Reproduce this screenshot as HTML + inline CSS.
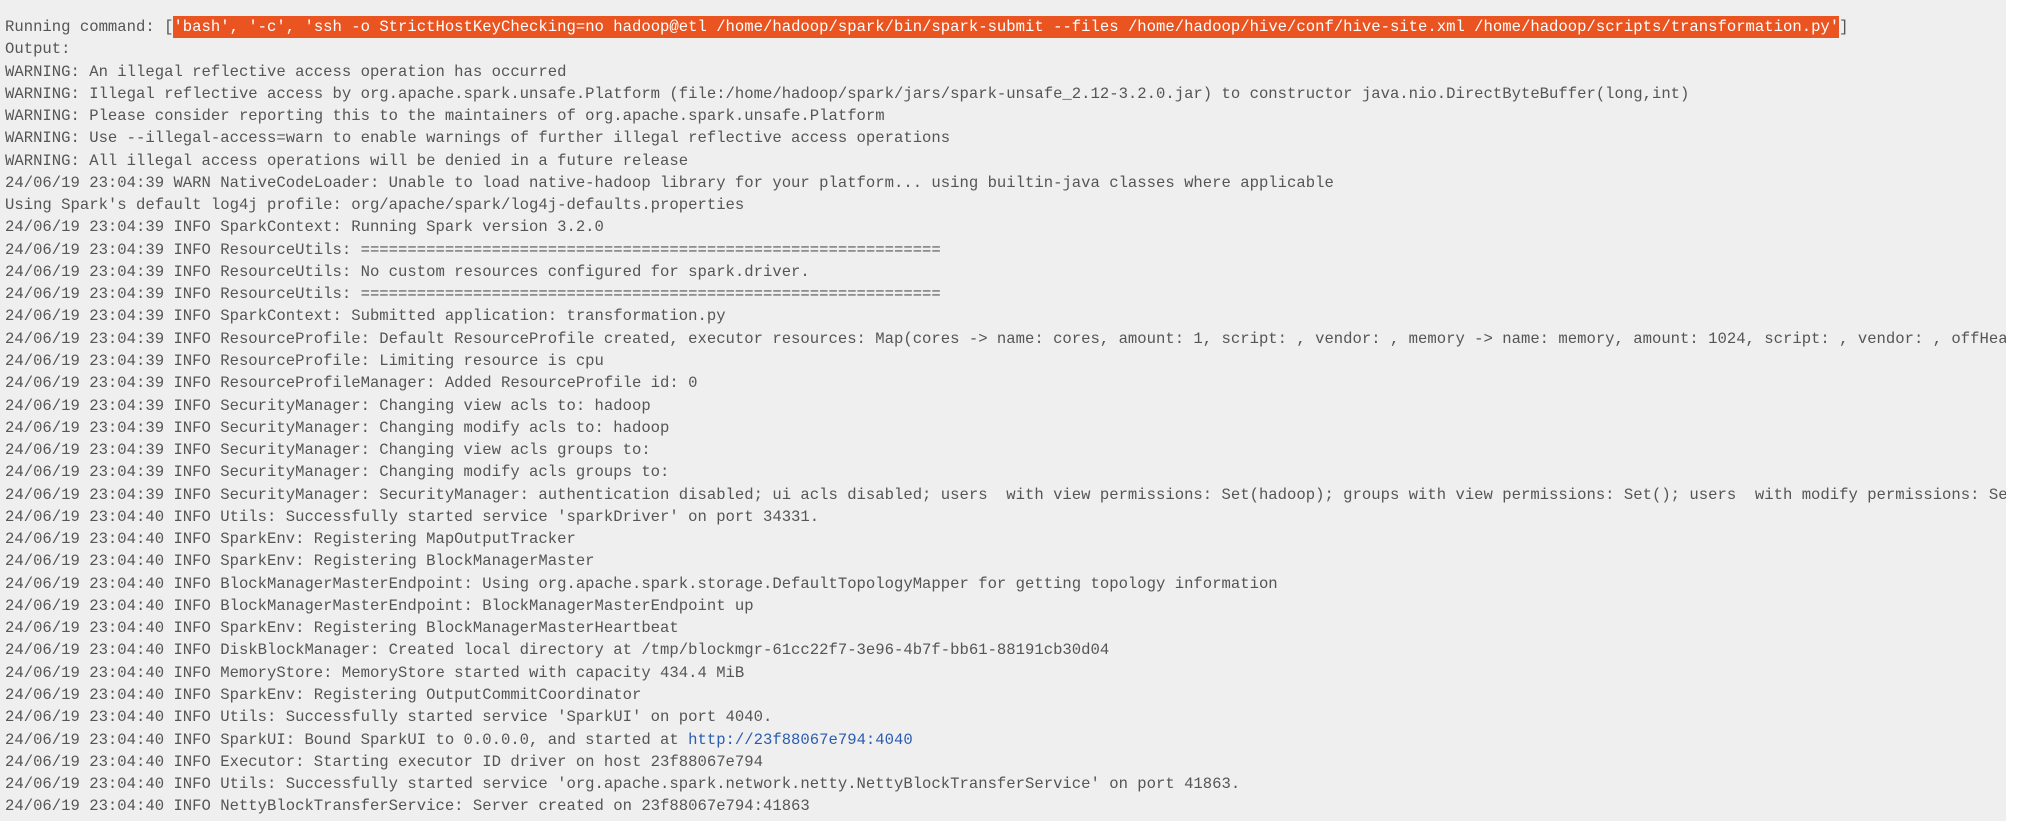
<!DOCTYPE html>
<html><head><meta charset="utf-8"><style>
html,body{margin:0;padding:0;background:#fff;width:2017px;height:821px;overflow:hidden}
#t{position:absolute;left:0;top:0;width:2006px;height:821px;background:#efefef;overflow:hidden}
pre{margin:0;padding:16px 0 0 5px;font-family:"Liberation Mono","DejaVu Sans Mono",monospace;font-size:15.6px;line-height:22.26px;color:#555;white-space:pre}
.h{background:#e95420;color:#fff;padding:2px 0}
.l{color:#2a5db0}
</style></head><body><div id="t"><pre>Running command: [<span class="h">'bash', '-c', 'ssh -o StrictHostKeyChecking=no hadoop@etl /home/hadoop/spark/bin/spark-submit --files /home/hadoop/hive/conf/hive-site.xml /home/hadoop/scripts/transformation.py'</span>]
Output:
WARNING: An illegal reflective access operation has occurred
WARNING: Illegal reflective access by org.apache.spark.unsafe.Platform (file:/home/hadoop/spark/jars/spark-unsafe_2.12-3.2.0.jar) to constructor java.nio.DirectByteBuffer(long,int)
WARNING: Please consider reporting this to the maintainers of org.apache.spark.unsafe.Platform
WARNING: Use --illegal-access=warn to enable warnings of further illegal reflective access operations
WARNING: All illegal access operations will be denied in a future release
24/06/19 23:04:39 WARN NativeCodeLoader: Unable to load native-hadoop library for your platform... using builtin-java classes where applicable
Using Spark's default log4j profile: org/apache/spark/log4j-defaults.properties
24/06/19 23:04:39 INFO SparkContext: Running Spark version 3.2.0
24/06/19 23:04:39 INFO ResourceUtils: ==============================================================
24/06/19 23:04:39 INFO ResourceUtils: No custom resources configured for spark.driver.
24/06/19 23:04:39 INFO ResourceUtils: ==============================================================
24/06/19 23:04:39 INFO SparkContext: Submitted application: transformation.py
24/06/19 23:04:39 INFO ResourceProfile: Default ResourceProfile created, executor resources: Map(cores -&gt; name: cores, amount: 1, script: , vendor: , memory -&gt; name: memory, amount: 1024, script: , vendor: , offHeap
24/06/19 23:04:39 INFO ResourceProfile: Limiting resource is cpu
24/06/19 23:04:39 INFO ResourceProfileManager: Added ResourceProfile id: 0
24/06/19 23:04:39 INFO SecurityManager: Changing view acls to: hadoop
24/06/19 23:04:39 INFO SecurityManager: Changing modify acls to: hadoop
24/06/19 23:04:39 INFO SecurityManager: Changing view acls groups to:
24/06/19 23:04:39 INFO SecurityManager: Changing modify acls groups to:
24/06/19 23:04:39 INFO SecurityManager: SecurityManager: authentication disabled; ui acls disabled; users  with view permissions: Set(hadoop); groups with view permissions: Set(); users  with modify permissions: Set
24/06/19 23:04:40 INFO Utils: Successfully started service 'sparkDriver' on port 34331.
24/06/19 23:04:40 INFO SparkEnv: Registering MapOutputTracker
24/06/19 23:04:40 INFO SparkEnv: Registering BlockManagerMaster
24/06/19 23:04:40 INFO BlockManagerMasterEndpoint: Using org.apache.spark.storage.DefaultTopologyMapper for getting topology information
24/06/19 23:04:40 INFO BlockManagerMasterEndpoint: BlockManagerMasterEndpoint up
24/06/19 23:04:40 INFO SparkEnv: Registering BlockManagerMasterHeartbeat
24/06/19 23:04:40 INFO DiskBlockManager: Created local directory at /tmp/blockmgr-61cc22f7-3e96-4b7f-bb61-88191cb30d04
24/06/19 23:04:40 INFO MemoryStore: MemoryStore started with capacity 434.4 MiB
24/06/19 23:04:40 INFO SparkEnv: Registering OutputCommitCoordinator
24/06/19 23:04:40 INFO Utils: Successfully started service 'SparkUI' on port 4040.
24/06/19 23:04:40 INFO SparkUI: Bound SparkUI to 0.0.0.0, and started at <span class="l">http://23f88067e794:4040</span>
24/06/19 23:04:40 INFO Executor: Starting executor ID driver on host 23f88067e794
24/06/19 23:04:40 INFO Utils: Successfully started service 'org.apache.spark.network.netty.NettyBlockTransferService' on port 41863.
24/06/19 23:04:40 INFO NettyBlockTransferService: Server created on 23f88067e794:41863</pre></div></body></html>
